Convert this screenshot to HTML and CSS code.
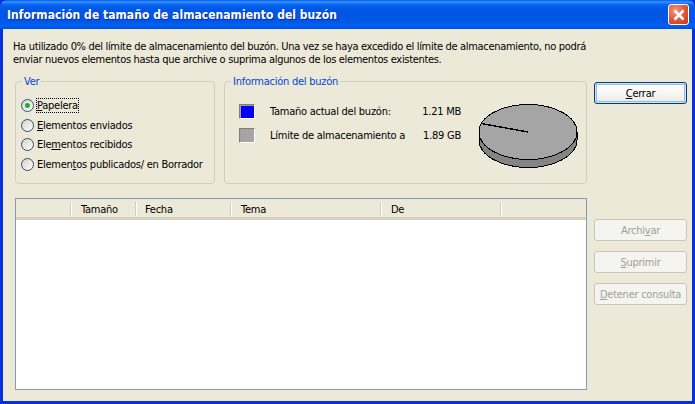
FILE: index.html
```html
<!DOCTYPE html>
<html lang="es">
<head>
    <meta charset="UTF-8">
    <title>Información de tamaño de almacenamiento del buzón</title>
    <link rel="stylesheet" href="styles.css">
</head>
<body>
    <div class="window">
        <div class="titlebar">
            <span class="title">Información de tamaño de almacenamiento del buzón</span>
            <div class="close">
                <svg width="14" height="14" viewBox="0 0 14 14">
                    <path d="M2.5 2.5 L11.5 11.5 M11.5 2.5 L2.5 11.5" stroke="#fff" stroke-width="2.6" fill="none"/>
                </svg>
            </div>
        </div>

        <div class="content">
            <div class="main">
                <p class="intro">Ha utilizado 0% del límite de almacenamiento del buzón. Una vez se haya excedido el límite de almacenamiento, no podrá<br>enviar nuevos elementos hasta que archive o suprima algunos de los elementos existentes.</p>

                <div class="groups">
                    <fieldset class="group group-ver">
                        <legend>Ver</legend>
                        <label class="radio-row"><input type="radio" name="ver" checked><span class="focused"><u>P</u>apelera</span></label>
                        <label class="radio-row"><input type="radio" name="ver"><span><u>E</u>lementos enviados</span></label>
                        <label class="radio-row"><input type="radio" name="ver"><span>Ele<u>m</u>entos recibidos</span></label>
                        <label class="radio-row"><input type="radio" name="ver"><span>Elemen<u>t</u>os publicados/ en Borrador</span></label>
                    </fieldset>

                    <fieldset class="group group-info">
                        <legend>Información del buzón</legend>
                        <div class="info-body">
                            <div class="info-rows">
                                <div class="info-row">
                                    <span class="swatch swatch-blue"></span>
                                    <span class="info-label">Tamaño actual del buzón:</span>
                                    <span class="info-value">1.21 MB</span>
                                </div>
                                <div class="info-row">
                                    <span class="swatch swatch-gray"></span>
                                    <span class="info-label">Límite de almacenamiento a</span>
                                    <span class="info-value">1.89 GB</span>
                                </div>
                            </div>
                            <svg class="pie" width="102" height="66" viewBox="0 0 102 66" shape-rendering="crispEdges">
                                <path d="M1 28 V36 A49 27.5 0 0 0 99 36 V28 Z" fill="#848484" stroke="#000"/>
                                <ellipse cx="50" cy="28" rx="49" ry="27.5" fill="#a5a5a5" stroke="#000"/>
                                <path d="M3 19.5 L50 28" stroke="#000" stroke-width="1.4" fill="none"/>
                            </svg>
                        </div>
                    </fieldset>
                </div>

                <div class="list">
                    <div class="list-header">
                        <div class="col col-icon"></div>
                        <div class="col col-size">Tamaño</div>
                        <div class="col col-date">Fecha</div>
                        <div class="col col-subject">Tema</div>
                        <div class="col col-from">De</div>
                    </div>
                </div>
            </div>

            <div class="side">
                <button class="btn btn-default"><u>C</u>errar</button>
                <div class="side-actions">
                    <button class="btn" disabled>Archi<u>v</u>ar</button>
                    <button class="btn" disabled><u>S</u>uprimir</button>
                    <button class="btn" disabled><u>D</u>etener consulta</button>
                </div>
            </div>
        </div>
    </div>
</body>
</html>
```

FILE: styles.css
```css
html, body {
    margin: 0;
    padding: 0;
    background: #0831d9;
}
.window {
    width: 695px;
    height: 404px;
    display: flex;
    flex-direction: column;
    box-sizing: border-box;
    overflow: hidden;
    font-family: "DejaVu Sans Condensed", "DejaVu Sans", sans-serif;
    font-size: 11px;
    letter-spacing: -0.25px;
    color: #000;
    background: #0831d9;
    border-radius: 7px 7px 0 0;
}
.titlebar {
    height: 29px;
    flex: none;
    display: flex;
    align-items: center;
    justify-content: space-between;
    box-sizing: border-box;
    padding: 0 6px 0 7px;
    background: linear-gradient(to bottom, #0058ee 0, #3d95ff 2px, #0a6af5 4px, #0058e6 8px, #0055e5 20px, #0060f5 26px, #0050d8 29px);
}
.title {
    color: #fff;
    font-weight: bold;
    font-size: 12px;
    letter-spacing: 0.04px;
    text-shadow: 1px 1px 0 #0a2fa8;
}
.close {
    width: 19px;
    height: 19px;
    display: flex;
    align-items: center;
    justify-content: center;
    border: 1px solid #fff;
    border-radius: 3px;
    background: radial-gradient(circle at 35% 30%, #f09a80, #e2583a 50%, #c4371c);
}
.content {
    flex: 1;
    display: flex;
    margin: 0 3px 3px 3px;
    background: #ece9d8;
    padding-left: 12px;
}
.main {
    width: 572px;
    flex: none;
}
.intro {
    margin: 11px 0 0 -2px;
    line-height: 13px;
    white-space: nowrap;
    letter-spacing: -0.32px;
}
.groups {
    display: flex;
    gap: 9px;
    margin-top: 9px;
}
.group {
    margin: 0;
    padding: 0;
    box-sizing: border-box;
    height: 109px;
    border: 1px solid #d0d0bf;
    border-radius: 4px;
    min-width: 0;
}
.group legend {
    color: #0046d5;
    padding: 0 2px;
    margin-left: 6px;
    line-height: 13px;
}
.group-ver {
    width: 200px;
    padding: 8px 0 0 5px;
}
.group-ver legend {
    margin-left: 1px;
}
.group-info {
    width: 363px;
}
.radio-row {
    display: flex;
    align-items: center;
    height: 19.6px;
    gap: 2px;
    white-space: nowrap;
}
.radio-row input {
    appearance: none;
    width: 13px;
    height: 13px;
    margin: 0;
    flex: none;
    border: 1px solid #2a527e;
    border-radius: 50%;
    box-sizing: border-box;
    background: linear-gradient(135deg, #d5d2c4, #fff);
}
.radio-row input:checked {
    background: radial-gradient(circle, #22a622 0, #2fb02f 2px, transparent 3px), linear-gradient(135deg, #d5d2c4, #fff);
}
.radio-row span {
    padding: 0;
    border: 1px dotted transparent;
}
.radio-row .focused {
    border-color: #000;
}
.info-body {
    display: flex;
    padding: 16px 0 0 14px;
}
.info-rows {
    display: flex;
    flex-direction: column;
    gap: 9px;
    width: 222px;
}
.info-row {
    display: flex;
    align-items: center;
    height: 15px;
}
.swatch {
    width: 16px;
    height: 15px;
    flex: none;
    box-sizing: border-box;
    border: 1px solid;
    border-color: #808080 #fff #fff #808080;
    box-shadow: inset 1px 1px 0 #a0a0a0;
    margin-right: 15px;
}
.swatch-blue {
    background: #0000ff;
}
.swatch-gray {
    background: #a5a5a5;
}
.info-label {
    flex: 1;
    white-space: nowrap;
}
.info-value {
    white-space: nowrap;
}
.pie {
    margin: 0 0 0 17px;
    flex: none;
}
.list {
    margin-top: 14px;
    width: 572px;
    height: 192px;
    box-sizing: border-box;
    border: 1px solid #7f9db9;
    background: #fff;
}
.list-header {
    display: flex;
    height: 21px;
    box-sizing: border-box;
    background: #ece9d8;
    border-bottom: 3px solid #d6d2c2;
}
.col {
    box-sizing: border-box;
    padding-left: 9px;
    height: 14px;
    margin-top: 3px;
    line-height: 16px;
    border-right: 1px solid #d0cfbd;
    box-shadow: 1px 0 0 #fff;
}
.col-icon { width: 55px; }
.col-size { width: 65px; padding-left: 10px; }
.col-date { width: 95px; }
.col-subject { width: 150px; padding-left: 10px; }
.col-from { width: 120px; padding-left: 10px; }
.side {
    margin-left: 7px;
    width: 93px;
    padding-top: 53px;
}
.btn {
    display: block;
    width: 93px;
    height: 22px;
    margin: 0;
    padding: 0;
    font: inherit;
    letter-spacing: inherit;
    white-space: nowrap;
    box-sizing: border-box;
    border: 1px solid #003c74;
    border-radius: 3px;
    color: #000;
    background: linear-gradient(to bottom, #fff, #f0f0ea 85%, #dcd8cb);
}
.btn-default {
    box-shadow: inset 0 0 0 1px #cee7ff, inset 0 0 0 2px #98b8ea;
}
.btn:disabled {
    border-color: #c9c7ba;
    background: #f4f4f0;
    color: #a1a192;
}
.side-actions {
    margin-top: 115px;
    display: flex;
    flex-direction: column;
    gap: 10px;
}
```
